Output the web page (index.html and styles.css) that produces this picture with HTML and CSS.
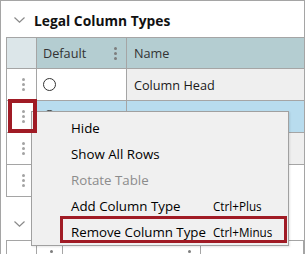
FILE: index.html
```html
<!DOCTYPE html>
<html lang="en">

<head>
    <meta charset="UTF-8">
    <meta name="viewport" content="width=device-width, initial-scale=1.0">
    <title>Legal Column Types</title>
    <link rel="stylesheet" href="styles.css">
</head>

<body>
    <div class="frame">
        <div class="section-head">
            <svg class="chevron" width="11" height="6" viewBox="0 0 11 6"><path d="M0.5 0.5 L5.5 5.2 L10.5 0.5" fill="none" stroke="#8a8a8a" stroke-width="1.2"/></svg>
            <h2>Legal Column Types</h2>
        </div>

        <div class="grid">
            <div class="cell corner"></div>
            <div class="cell head">Default <span class="kebab dark"><i></i><i></i><i></i></span></div>
            <div class="cell head name">Name</div>

            <div class="cell rownum"><span class="kebab"><i></i><i></i><i></i></span></div>
            <div class="cell"><span class="radio"></span></div>
            <div class="cell name gray">Column Head</div>

            <!-- selected row, mostly under the context menu -->
            <div class="cell rownum"><span class="kebab"><i></i><i></i><i></i></span></div>
            <div class="cell blue"><span class="radio"></span></div>
            <div class="cell name blue"></div>

            <div class="cell rownum"><span class="kebab"><i></i><i></i><i></i></span></div>
            <div class="cell gray"><span class="radio"></span></div>
            <div class="cell name gray"></div>

            <div class="cell rownum last"><span class="kebab"><i></i><i></i><i></i></span></div>
            <div class="cell last"></div>
            <div class="cell name last"></div>
        </div>

        <div class="section-head second">
            <svg class="chevron" width="11" height="6" viewBox="0 0 11 6"><path d="M0.5 0.5 L5.5 5.2 L10.5 0.5" fill="none" stroke="#8a8a8a" stroke-width="1.2"/></svg>
        </div>

        <div class="grid grid-two">
            <div class="cell"></div>
            <div class="cell head-plain"><span class="kebab dark"><i></i><i></i><i></i></span></div>
            <div class="cell head-plain"><span class="kebab dark"><i></i><i></i><i></i></span></div>
            <div class="cell"></div>
        </div>

        <div class="menu">
            <div class="item"><span class="label">Hide</span></div>
            <div class="item"><span class="label">Show All Rows</span></div>
            <div class="item disabled"><span class="label">Rotate Table</span></div>
            <div class="item"><span class="label">Add Column Type</span><span class="key">Ctrl+Plus</span></div>
            <div class="item"><span class="label">Remove Column Type</span><span class="key">Ctrl+Minus</span></div>
        </div>

        <!-- callout boxes -->
        <div class="callout callout-row"></div>
        <div class="callout callout-item"></div>
    </div>
</body>

</html>
```

FILE: styles.css
```css
body {
    margin: 0;
    font-family: "Open Sans", "Noto Sans", sans-serif;
    color: #1a1a1a;
    background-color: #fff;
    overflow: hidden;
}

.frame {
    position: relative;
    width: 305px;
    height: 254px;
    box-sizing: border-box;
    border: 1px solid #a5a5a5;
    border-bottom: none;
    padding-left: 5px;
    overflow: hidden;
}

.section-head {
    display: flex;
    align-items: center;
    height: 36px;
    margin-left: -5px;
    padding-left: 13px;
    padding-top: 2px;
    box-sizing: border-box;
}

.section-head h2 {
    margin: 0 0 0 9px;
    font-size: 13.8px;
    font-weight: bold;
    color: #111;
}

.section-head.second {
    height: 43px;
    padding-top: 11px;
}

.chevron {
    display: block;
}

.grid {
    display: grid;
    grid-template-columns: 30px 90px 1fr;
    grid-auto-rows: 32px;
    grid-template-rows: 31px;
    border-top: 1px solid #a5a5a5;
    border-left: 1px solid #a5a5a5;
    font-size: 12.7px;
}

.cell {
    display: flex;
    align-items: center;
    border-right: 1px solid #a5a5a5;
    border-bottom: 1px solid #a5a5a5;
    background-color: #fff;
    padding-left: 6px;
    position: relative;
    white-space: nowrap;
}

.cell.name {
    border-right: none;
    padding-left: 7px;
}

.cell.corner {
    background-color: #dce6e9;
}

.cell.head {
    background-color: #b4cdd1;
    color: #333;
}

.cell.gray {
    background-color: #efefef;
}

.cell.blue {
    background-color: #b8dcee;
}

.cell.rownum {
    padding-left: 0;
    justify-content: center;
}

.cell.last {
    border-bottom: none;
}

.cell.rownum.last {
    border-bottom: 1px solid #a5a5a5;
}

.kebab {
    display: flex;
    flex-direction: column;
    gap: 2px;
    margin-left: 4px;
}

.kebab i {
    display: block;
    width: 3px;
    height: 3px;
    border-radius: 50%;
    background-color: #a3a3a3;
}

.cell.head .kebab, .cell.head-plain .kebab {
    position: absolute;
    right: 9px;
    top: 9px;
    margin: 0;
}

.kebab.dark i {
    background-color: #7d7d7d;
}

.radio {
    width: 11px;
    height: 11px;
    border: 1px solid #333;
    border-radius: 50%;
    background-color: #fff;
}

.grid-two {
    grid-template-columns: 30px 26px 138px 1fr;
    grid-template-rows: 31px;
}

.menu {
    position: absolute;
    left: 30px;
    top: 110px;
    width: 258px;
    box-sizing: border-box;
    border: 1px solid #a0a0a0;
    background-color: #f0f0f0;
    padding: 3px 0 0;
    font-size: 13.3px;
    box-shadow: 1px 1px 2px rgba(0, 0, 0, 0.1);
}

.menu .item {
    display: flex;
    align-items: center;
    height: 26px;
    padding-left: 39px;
    color: #000;
}

.menu .item.disabled {
    color: #8c8c8c;
}

.menu .label {
    width: 142px;
    flex-shrink: 0;
    white-space: nowrap;
}

.menu .key {
    font-size: 11.7px;
    white-space: nowrap;
}

.callout {
    position: absolute;
    box-sizing: border-box;
    border: 3px solid #a01b25;
}

.callout-row {
    left: 7px;
    top: 98px;
    width: 29px;
    height: 34px;
    border-width: 4px;
}

.callout-item {
    left: 59px;
    top: 215px;
    width: 227px;
    height: 27px;
}
```
